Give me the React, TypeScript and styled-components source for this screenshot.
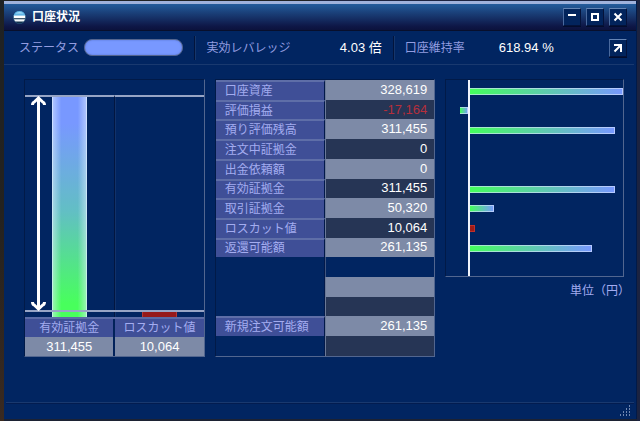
import React from "react";
import styled, { createGlobalStyle } from "styled-components";

const GlobalStyle = createGlobalStyle`
  *, *::before, *::after { box-sizing: border-box; }
  html, body, #root { height: 100%; }
  body {
    margin: 0;
    background: #1a1c22;
    color: #fff;
    font-family: "Liberation Sans", "Noto Sans CJK JP", sans-serif;
    font-size: 12px;
    line-height: 16px;
  }
`;

const UNIT_MAX = 328619;

type Item = { label?: string; value?: string; amount?: number; tone?: "light" | "dark" };

const items: Item[] = [
  { label: "口座資産", value: "328,619", amount: 328619, tone: "light" },
  { label: "評価損益", value: "-17,164", amount: -17164, tone: "dark" },
  { label: "預り評価残高", value: "311,455", amount: 311455, tone: "light" },
  { label: "注文中証拠金", value: "0", amount: 0, tone: "dark" },
  { label: "出金依頼額", value: "0", amount: 0, tone: "light" },
  { label: "有効証拠金", value: "311,455", amount: 311455, tone: "dark" },
  { label: "取引証拠金", value: "50,320", amount: 50320, tone: "light" },
  { label: "ロスカット値", value: "10,064", amount: 10064, tone: "dark" },
  { label: "返還可能額", value: "261,135", amount: 261135, tone: "light" },
  {},
  { tone: "light" },
  { tone: "dark" },
  { label: "新規注文可能額", value: "261,135", tone: "light" },
  { tone: "dark" },
];

const Desktop = styled.div`
  display: flex;
  min-height: 100%;
  padding: 1px 3px 2px 4px;
  background: linear-gradient(90deg, transparent 50%, #1c2340 50%),
    linear-gradient(#1f2224, #24221f 50%, #3a2a20);
`;

const Window = styled.main`
  flex: 1;
  display: flex;
  flex-direction: column;
  background: #012561;
  border-right: 1px solid #011a48;
  box-shadow: 0 2px 0 #1c2233;
`;

const TitleBar = styled.header`
  display: flex;
  align-items: center;
  gap: 6px;
  height: 30px;
  padding: 0 9px;
  border-top: 3px solid #9fb2dc;
  border-bottom: 1px solid #080f2c;
  background: linear-gradient(#235c9c, #1a3f78 35%, #0e1747 85%, #0c123c);
`;

const Title = styled.h1`
  flex: 1;
  margin: 0;
  font-size: 12px;
  font-weight: 700;
  line-height: 16px;
`;

const WindowButtons = styled.div`
  display: flex;
  gap: 5px;
`;

const IconButton = styled.button`
  display: grid;
  place-items: center;
  width: 18px;
  height: 18px;
  padding: 0;
  border: 1px solid;
  border-color: #6585b5 #04123a #04123a #4a6a9e;
  background: #02245c;
  color: #fff;
  box-shadow: 0 1px 0 #030d2c;
`;

const InfoBar = styled.section`
  display: grid;
  grid-template-columns: 191fr 199fr 242fr;
  align-items: center;
  height: 34px;
  margin: 0 2px 0 0;
  border-bottom: 1px solid #19396f;
`;

const InfoCell = styled.div<{ $divided?: boolean }>`
  display: flex;
  align-items: center;
  height: 24px;
  padding: 0 11px 0 ${(p) => (p.$divided ? 11 : 15)}px;
  border-left: ${(p) => (p.$divided ? "1px solid #02143c" : "0")};
  box-shadow: ${(p) => (p.$divided ? "inset 1px 0 0 #15366c" : "none")};
  white-space: nowrap;
`;

const InfoLabel = styled.span`
  color: #939de0;
`;

const StatusPill = styled.span`
  flex: 1;
  height: 17px;
  margin-left: 5px;
  border: 1px solid #53658f;
  border-radius: 8px;
  background: #7898ff;
  box-shadow: inset 0 0 2px #5570c8;
`;

const InfoValue = styled.span`
  margin-left: auto;
  font-size: 13px;
`;

const MarginRate = styled(InfoCell)`
  display: grid;
  grid-template-columns: auto 1fr 18px;
  column-gap: 34px;
  padding-right: 7px;

  ${InfoValue} {
    margin-left: 0;
  }
`;

const Body = styled.div`
  flex: 1;
  display: grid;
  grid-template-columns: 181fr 221fr 179fr;
  column-gap: 10px;
  align-items: start;
  padding: 14px 12px 0 20px;
`;

const Frame = styled.section`
  border: 1px solid;
  border-color: #011a48 #52668f #52668f #011a48;
`;

const Compare = styled(Frame)`
  display: grid;
  grid-template-rows: 237px auto;
`;

const Plot = styled.div`
  position: relative;
  display: grid;
  grid-template-columns: 1fr 1fr;
  padding-top: 15px;
`;

const PlotColumn = styled.div`
  display: flex;
  align-items: flex-end;
  justify-content: center;
  border-top: 2px solid #97a5c5;

  & + & {
    border-left: 1px solid #021640;
    box-shadow: inset 1px 0 0 #12326a;
  }
`;

const glow = "linear-gradient(90deg, rgba(225, 240, 255, 0.5), transparent 25%, transparent 75%, rgba(225, 240, 255, 0.5))";

const Column = styled.div<{ $alert?: boolean }>`
  width: 35px;
  border: 1px solid ${(p) => (p.$alert ? "#b03a38" : "rgba(225, 240, 255, 0.65)")};
  border-width: 0 1px;
  background: ${(p) =>
    p.$alert ? "#961a1a" : `${glow}, linear-gradient(#7898ff 12%, #62bfc4 52%, #48ff5c 94%)`};
`;

const BaseLine = styled.div`
  position: absolute;
  left: 0;
  right: 0;
  bottom: 5px;
  height: 2px;
  background: #97a5c5;
`;

const Span = styled.svg`
  position: absolute;
  left: 6px;
  top: 16px;
`;

const CompareTable = styled.table`
  width: 100%;
  table-layout: fixed;
  border-collapse: collapse;

  th,
  td {
    height: 19px;
    padding: 0;
    text-align: center;
    white-space: nowrap;
  }
  th + th,
  td + td {
    border-left: 2px solid #02225a;
  }
  th {
    border-top: 2px solid #5b6ca6;
    background: #3f4f97;
    color: #a3acf0;
    font-weight: 400;
  }
  td {
    background: #7d8aa7;
    font-size: 13px;
  }
`;

const Ledger = styled.table`
  width: 100%;
  height: 278px;
  table-layout: fixed;
  border-collapse: separate;
  border-spacing: 0;
  border: 1px solid;
  border-color: #011a48 #52668f #52668f #011a48;
`;

const LedgerRow = styled.tr`
  height: 19px;
`;

const LedgerLabel = styled.th<{ $filled: boolean }>`
  padding: 0 0 0 9px;
  border-top: ${(p) => (p.$filled ? "2px solid #5e6ea8" : "0")};
  border-right: 1px solid #02194a;
  background: ${(p) => (p.$filled ? "#3f4f97" : "transparent")};
  color: #a3acf0;
  font-weight: 400;
  text-align: left;
  white-space: nowrap;
`;

const toneColor = { light: "#7d8aa7", dark: "#263555", none: "transparent" };

const LedgerValue = styled.td<{ $tone: "light" | "dark" | "none"; $loss: boolean }>`
  padding: 0 7px 0 0;
  border-left: 1px solid ${(p) => (p.$tone === "none" ? "#40557f" : "#6a7896")};
  background: ${(p) => toneColor[p.$tone]};
  color: ${(p) => (p.$loss ? "#b52f3c" : "#fff")};
  font-size: 13px;
  text-align: right;
`;

const BarChart = styled(Frame)`
  display: grid;
  grid-template-rows: repeat(10, 1fr);
  height: 198px;
`;

const BarRow = styled.div`
  display: grid;
  grid-template-columns: 22px 1fr;
`;

const BarSide = styled.div<{ $negative?: boolean }>`
  display: flex;
  align-items: center;
  justify-content: ${(p) => (p.$negative ? "flex-end" : "flex-start")};
  padding-top: 3px;
  border-left: ${(p) => (p.$negative ? "0" : "2px solid #f0f4fc")};
`;

const Bar = styled.div<{ $alert?: boolean }>`
  height: 7px;
  border: 1px solid ${(p) => (p.$alert ? "#c0302a" : "rgba(215, 228, 255, 0.65)")};
  border-left-width: 0;
  background: ${(p) => (p.$alert ? "#9e1c18" : "linear-gradient(90deg, #44ff5c, #7898ff) border-box")};
`;

const Unit = styled.p`
  margin: 5px 0 0;
  color: #a3acf0;
  text-align: right;
`;

const ClosingMark = styled.span`
  font-family: "Noto Sans CJK JP", sans-serif;
  font-feature-settings: "halt";
`;

const Footer = styled.footer`
  display: flex;
  align-items: flex-end;
  justify-content: flex-end;
  height: 17px;
  margin: 0 2px;
  padding: 3px;
  border-top: 1px solid #19396f;
  box-shadow: inset 0 1px 0 #021c50;
`;

const GRIP = [
  [9, 0],
  [6, 3], [9, 3],
  [3, 6], [6, 6], [9, 6],
  [0, 9], [3, 9], [6, 9], [9, 9],
];

function Logo() {
  return (
    <svg width="13" height="13" viewBox="0 0 13 13" aria-hidden="true">
      <circle cx="6.5" cy="6.5" r="6.4" fill="#2a5a80" />
      <circle cx="6.5" cy="6.8" r="5.6" fill="#12304c" />
      <path d="M.6 5a6 6 0 0 1 11.8 0z" fill="#5fb4e6" />
      <path d="M2.4 2.6a5.8 5.8 0 0 1 8.2 0z" fill="#a4dcf8" />
      <path d="M.8 4.6h11.4v2.6H.8z" fill="#fff" />
      <path d="M1 8.2h11a6 6 0 0 1-1.4 2.2H2.4A6 6 0 0 1 1 8.2z" fill="#f2f6fa" />
    </svg>
  );
}

export default function App() {
  return (
    <>
      <GlobalStyle />
      <Desktop>
        <Window>
          <TitleBar>
            <Logo />
            <Title>口座状況</Title>
            <WindowButtons>
              <IconButton type="button" aria-label="最小化">
                <svg width="12" height="12"><path d="M2 3h8v2H2z" fill="currentColor" /></svg>
              </IconButton>
              <IconButton type="button" aria-label="最大化">
                <svg width="12" height="12"><path d="M3 3h6v6H3z" fill="none" stroke="currentColor" strokeWidth="2" /></svg>
              </IconButton>
              <IconButton type="button" aria-label="閉じる">
                <svg width="12" height="12"><path d="M2.5 2.5l7 7M9.5 2.5l-7 7" stroke="currentColor" strokeWidth="2" /></svg>
              </IconButton>
            </WindowButtons>
          </TitleBar>

          <InfoBar>
            <InfoCell>
              <InfoLabel>ステータス</InfoLabel>
              <StatusPill role="img" aria-label="正常" />
            </InfoCell>
            <InfoCell $divided>
              <InfoLabel>実効レバレッジ</InfoLabel>
              <InfoValue>4.03 倍</InfoValue>
            </InfoCell>
            <MarginRate $divided>
              <InfoLabel>口座維持率</InfoLabel>
              <InfoValue>618.94 %</InfoValue>
              <IconButton type="button" aria-label="別ウィンドウで開く">
                <svg width="12" height="12">
                  <path d="M2 3h7v7M9 3L2.5 9.5" fill="none" stroke="currentColor" strokeWidth="2" />
                </svg>
              </IconButton>
            </MarginRate>
          </InfoBar>

          <Body>
            <Compare>
              <Plot>
                <PlotColumn>
                  <Column style={{ height: "100%" }} />
                </PlotColumn>
                <PlotColumn>
                  <Column $alert style={{ height: `${(10064 / 311455) * 100}%` }} />
                </PlotColumn>
                <BaseLine />
                <Span width="15" height="215" viewBox="0 0 15 215" aria-hidden="true">
                  <g fill="none" stroke="#fff" strokeWidth="3">
                    <path d="M7.5 3v209" />
                    <path d="M1.5 9q0-2.5 2-3.2L7.5 2l4 3.8q2 .7 2 3.2" />
                    <path d="M1.5 206q0 2.5 2 3.2l4 3.8 4-3.8q2-.7 2-3.2" />
                  </g>
                </Span>
              </Plot>
              <CompareTable>
                <thead>
                  <tr>
                    <th scope="col">有効証拠金</th>
                    <th scope="col">ロスカット値</th>
                  </tr>
                </thead>
                <tbody>
                  <tr>
                    <td>311,455</td>
                    <td>10,064</td>
                  </tr>
                </tbody>
              </CompareTable>
            </Compare>

            <Ledger>
              <tbody>
                {items.map((item, i) => (
                  <LedgerRow key={i}>
                    <LedgerLabel scope="row" $filled={!!item.label}>{item.label}</LedgerLabel>
                    <LedgerValue $tone={item.tone ?? "none"} $loss={(item.amount ?? 0) < 0}>
                      {item.value}
                    </LedgerValue>
                  </LedgerRow>
                ))}
              </tbody>
            </Ledger>

            <div>
              <BarChart>
                {items.slice(0, 10).map((item, i) => {
                  const amount = item.amount ?? 0;
                  return (
                    <BarRow key={i}>
                      <BarSide $negative>
                        {amount < 0 && <Bar style={{ width: `${(-amount / UNIT_MAX) * 700}%` }} />}
                      </BarSide>
                      <BarSide>
                        {amount > 0 && (
                          <Bar
                            $alert={item.label === "ロスカット値"}
                            style={{ width: `${(amount / UNIT_MAX) * 100}%` }}
                          />
                        )}
                      </BarSide>
                    </BarRow>
                  );
                })}
              </BarChart>
              <Unit>
                単位（円<ClosingMark>）</ClosingMark>
              </Unit>
            </div>
          </Body>

          <Footer>
            <svg width="11" height="11" aria-hidden="true">
              {GRIP.map(([x, y]) => (
                <rect key={`${x}-${y}`} x={x} y={y} width="1" height="2" fill="#6f86b0" />
              ))}
            </svg>
          </Footer>
        </Window>
      </Desktop>
    </>
  );
}
